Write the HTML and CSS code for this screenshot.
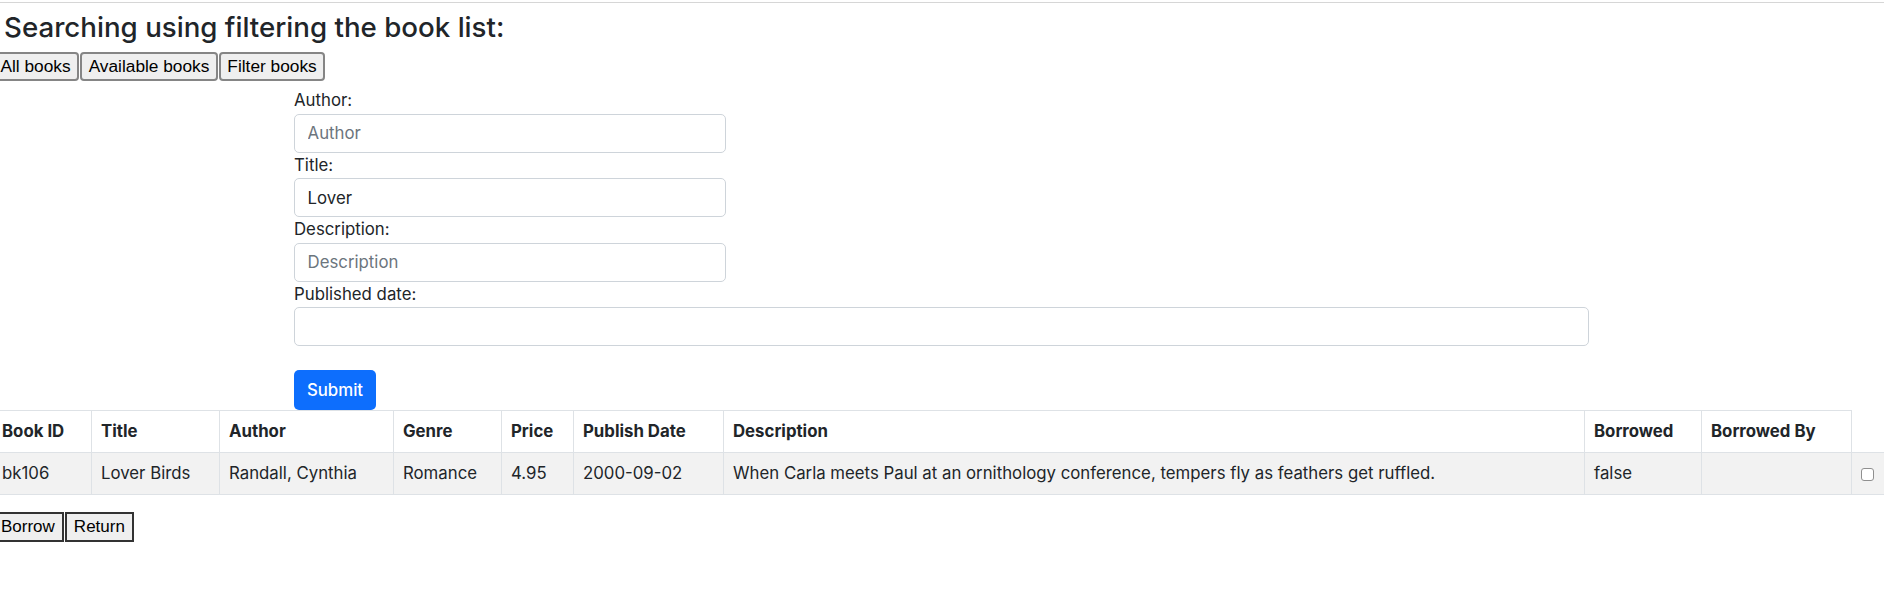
FILE: index.html
```html
<!DOCTYPE html>
<html lang="en">
<head>
<meta charset="utf-8">
<title>Book list</title>
<link rel="stylesheet" href="styles.css">
</head>
<body>
<div class="page">
  <div class="topline"></div>
  <h3 class="title">Searching using filtering the book list:</h3>
  <div class="tabs">
    <button class="tab">All books</button>
    <button class="tab">Available books</button>
    <button class="tab">Filter books</button>
  </div>
  <form class="filter">
    <label class="lbl">Author:</label>
    <input class="field field-short" type="text" placeholder="Author">
    <label class="lbl">Title:</label>
    <input class="field field-short" type="text" value="Lover">
    <label class="lbl">Description:</label>
    <input class="field field-short" type="text" placeholder="Description">
    <label class="lbl">Published date:</label>
    <input class="field field-wide" type="text">
    <button class="submit" type="button">Submit</button>
  </form>
  <table class="books">
    <colgroup>
      <col class="c-id"><col class="c-title"><col class="c-author"><col class="c-genre"><col class="c-price">
      <col class="c-date"><col class="c-desc"><col class="c-borrowed"><col class="c-by"><col class="c-check">
    </colgroup>
    <thead>
      <tr>
        <th>Book ID</th><th>Title</th><th>Author</th><th>Genre</th><th>Price</th>
        <th>Publish Date</th><th>Description</th><th>Borrowed</th><th>Borrowed By</th>
      </tr>
    </thead>
    <tbody>
      <tr class="striped">
        <td>bk106</td><td>Lover Birds</td><td>Randall, Cynthia</td><td>Romance</td><td>4.95</td>
        <td>2000-09-02</td><td>When Carla meets Paul at an ornithology conference, tempers fly as feathers get ruffled.</td>
        <td>false</td><td></td><td class="check-cell"><input class="check" type="checkbox"></td>
      </tr>
    </tbody>
  </table>
  <div class="actions">
    <button class="act">Borrow</button>
    <button class="act">Return</button>
  </div>
</div>
</body>
</html>
```
FILE: styles.css
```css
* { box-sizing: border-box; }
html, body { margin: 0; padding: 0; background: #fff; }
body {
  font-family: Inter, "Noto Sans", sans-serif;
  color: #212529;
}
.page {
  width: 1884px;
  height: 606px;
  overflow: hidden;
}
.topline {
  height: 1px;
  margin-top: 2px;
  background: #d6d6d6;
}
.title {
  margin: 6px 0 0 4px;
  font-size: 27.7px;
  line-height: 36px;
  font-weight: 500;
}
.tabs {
  display: flex;
  gap: 1px;
  margin: 7px 0 0 -8px;
}
.tab {
  height: 29px;
  padding: 0 6.5px;
  font: 17.3px "Liberation Sans", Arial, sans-serif;
  color: #000;
  background: #efefef;
  border: 2px solid #858585;
  border-radius: 4px;
}
.filter {
  width: 1296px;
  margin: 7px auto 0;
}
.lbl {
  display: block;
  font-size: 16.8px;
  line-height: 25.5px;
}
.field {
  display: block;
  height: 39px;
  padding: 0 12.6px;
  font-family: inherit;
  font-size: 16.8px;
  color: #212529;
  border: 1px solid #ced4da;
  border-radius: 5px;
  background: #fff;
}
.field::placeholder { color: #6c757d; }
.field-short { width: 432px; }
.field-wide { width: 1295px; }
.submit {
  display: block;
  margin-top: 24px;
  width: 82px;
  height: 40px;
  border: 0;
  border-radius: 5px;
  background: #0d6efd;
  color: #fff;
  font-family: inherit;
  font-size: 16.8px;
  font-weight: 500;
}
.books {
  margin-left: -8px;
  width: 1892px;
  border-collapse: collapse;
  table-layout: fixed;
}
.c-id { width: 99px; }
.c-title { width: 128px; }
.c-author { width: 174px; }
.c-genre { width: 108px; }
.c-price { width: 72px; }
.c-date { width: 150px; }
.c-desc { width: 861px; }
.c-borrowed { width: 117px; }
.c-by { width: 150px; }
.c-check { width: 33px; }
.books th, .books td {
  border: 1px solid #dee2e6;
  padding: 8px 9px;
  line-height: 25px;
  font-size: 16.8px;
  text-align: left;
  vertical-align: top;
  white-space: nowrap;
}
.books th { font-weight: 700; }
.striped td { background: #f2f2f2; }
.check {
  -webkit-appearance: none;
  appearance: none;
  display: block;
  width: 13px;
  height: 13px;
  margin: 7px 0 0;
  border: 1px solid #8f8f8f;
  border-radius: 3px;
  background: #fff;
}
.actions {
  display: flex;
  gap: 1px;
  margin: 17px 0 0 -8px;
}
.act {
  height: 30px;
  padding: 0 7px;
  font: 17px "Liberation Sans", Arial, sans-serif;
  color: #000;
  background: #efefef;
  border: 2px solid #333;
  border-radius: 0;
}
```
